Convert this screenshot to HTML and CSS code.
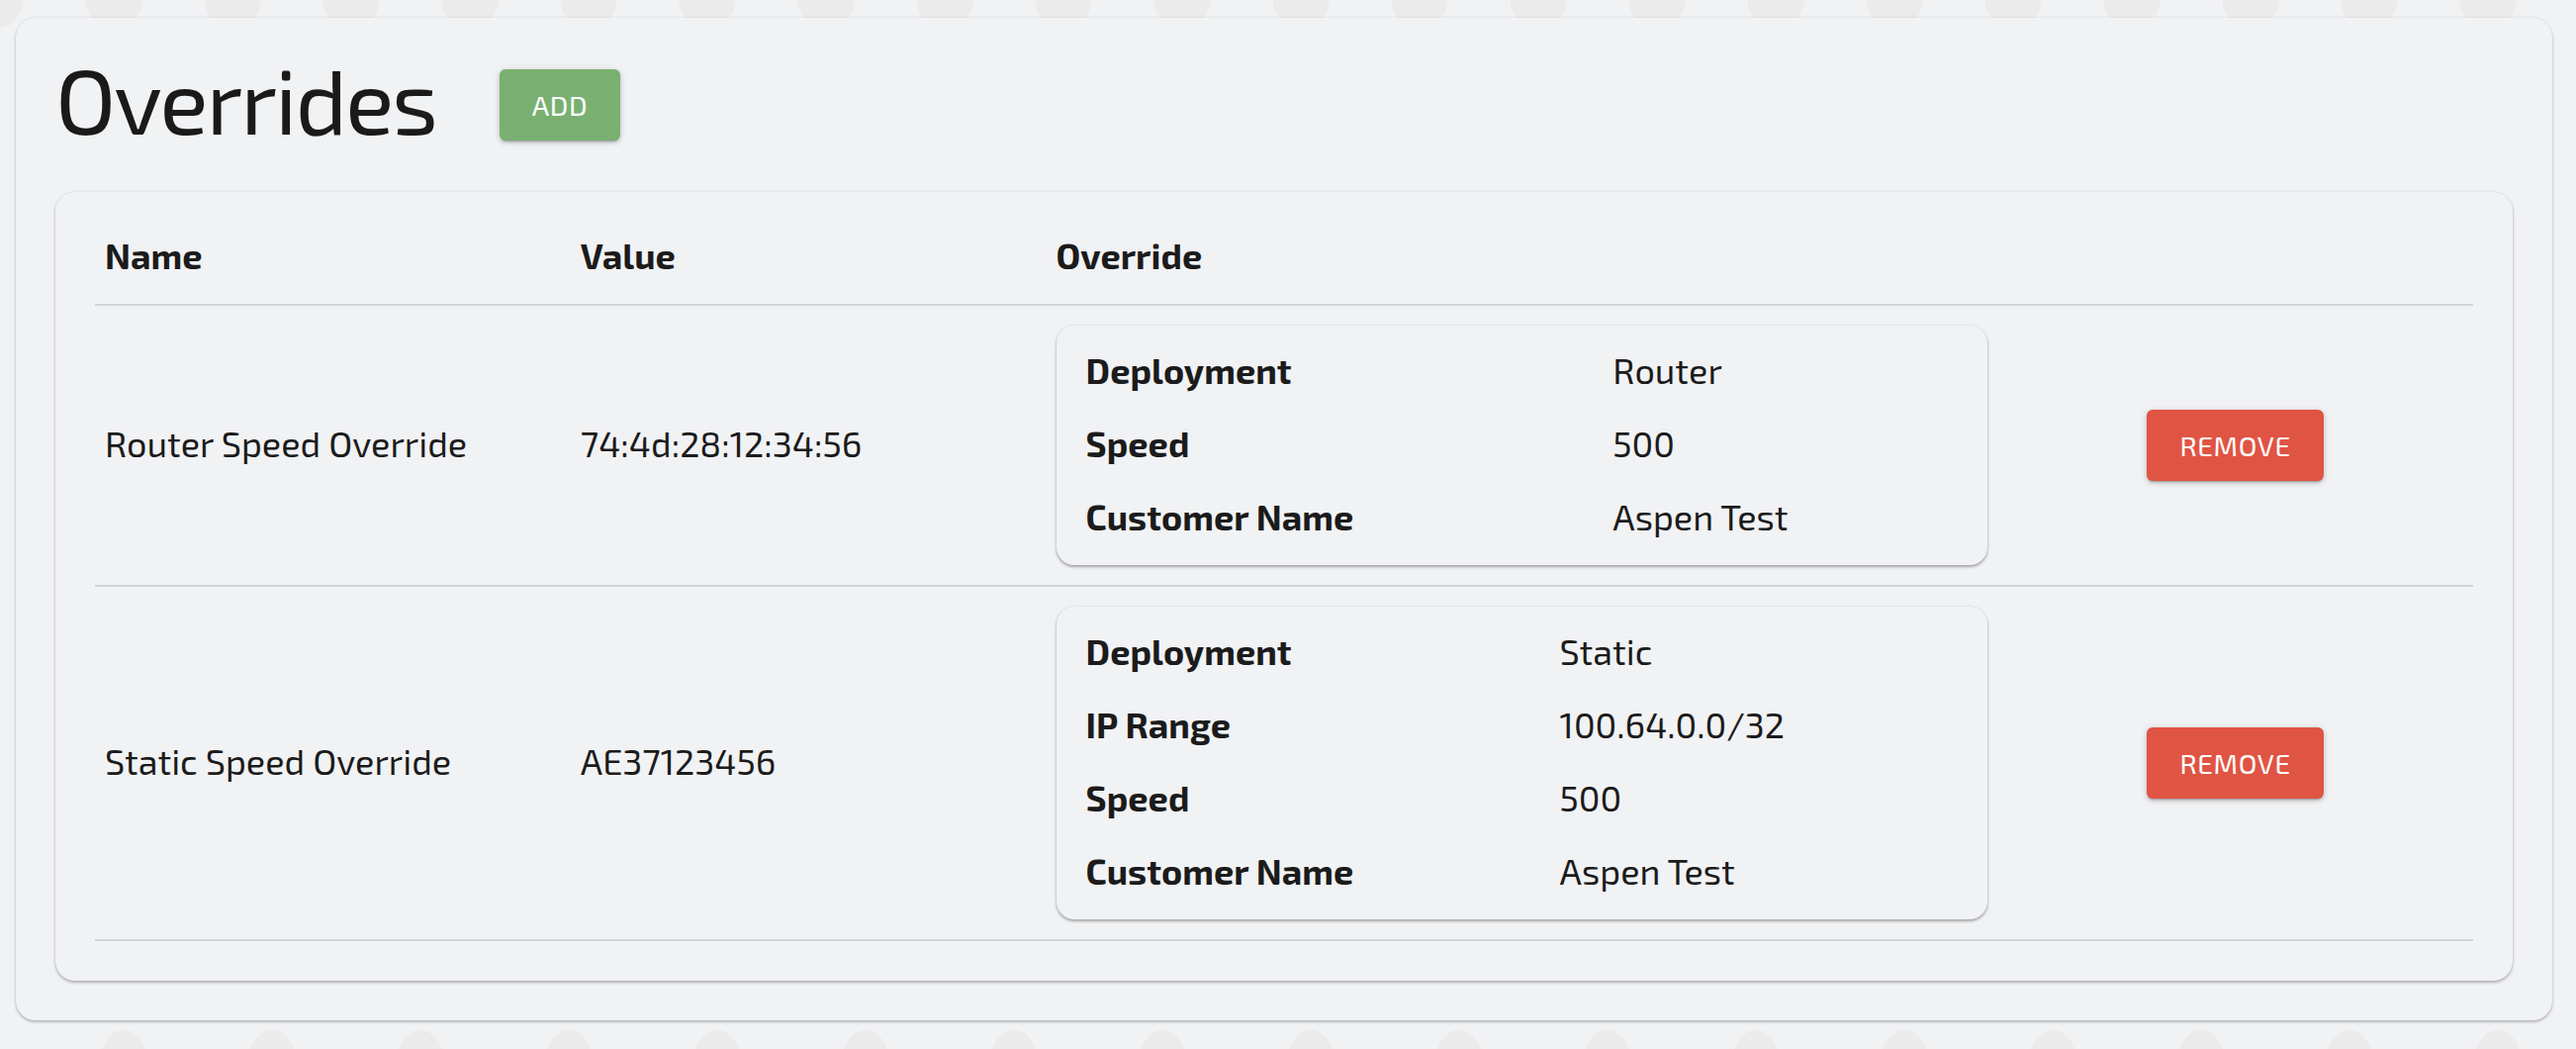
FILE: index.html
```html
<!DOCTYPE html>
<html lang="en">
<head>
<meta charset="utf-8">
<title>Overrides</title>
<link rel="stylesheet" href="styles.css">
</head>
<body>
<main class="panel">
  <header class="panel-head">
    <h1 class="panel-title">Overrides</h1>
    <button class="btn btn-add" type="button">ADD</button>
  </header>

  <section class="table-card">
    <table class="overrides">
      <colgroup>
        <col class="col-name">
        <col class="col-value">
        <col class="col-override">
        <col class="col-action">
      </colgroup>
      <thead>
        <tr class="head-row">
          <th class="head-cell">Name</th>
          <th class="head-cell">Value</th>
          <th class="head-cell">Override</th>
          <th class="head-cell"></th>
        </tr>
      </thead>
      <tbody>
        <tr>
          <td class="cell cell-text">Router Speed Override</td>
          <td class="cell cell-text">74:4d:28:12:34:56</td>
          <td class="cell">
            <div class="detail-card">
              <table class="detail">
                <tr class="detail-row"><th class="detail-key">Deployment</th><td class="detail-val">Router</td></tr>
                <tr class="detail-row"><th class="detail-key">Speed</th><td class="detail-val">500</td></tr>
                <tr class="detail-row"><th class="detail-key">Customer Name</th><td class="detail-val">Aspen Test</td></tr>
              </table>
            </div>
          </td>
          <td class="cell action"><button class="btn btn-remove" type="button">REMOVE</button></td>
        </tr>
        <tr>
          <td class="cell cell-text">Static Speed Override</td>
          <td class="cell cell-text">AE37123456</td>
          <td class="cell">
            <div class="detail-card">
              <table class="detail">
                <tr class="detail-row"><th class="detail-key">Deployment</th><td class="detail-val">Static</td></tr>
                <tr class="detail-row"><th class="detail-key">IP Range</th><td class="detail-val">100.64.0.0/32</td></tr>
                <tr class="detail-row"><th class="detail-key">Speed</th><td class="detail-val">500</td></tr>
                <tr class="detail-row"><th class="detail-key">Customer Name</th><td class="detail-val">Aspen Test</td></tr>
              </table>
            </div>
          </td>
          <td class="cell action"><button class="btn btn-remove" type="button">REMOVE</button></td>
        </tr>
      </tbody>
    </table>
  </section>
</main>
</body>
</html>
```
FILE: styles.css
```css
html, body {
  margin: 0;
  padding: 0;
}

body {
  height: 1060px;
  box-sizing: border-box;
  padding-top: 18px;
  background-color: #f1f2f4;
  background-image:
    radial-gradient(circle, #ebebec 0, #ebebec 28px, rgba(235,235,236,0) 29px),
    radial-gradient(ellipse 26px 40px, #ebebec 0, #ebebec 96%, rgba(235,235,236,0) 100%);
  background-size: 120px 120px, 150px 120px;
  background-repeat: repeat-x, repeat-x;
  background-position: 55px -60px, 1100px 1020px;
  font-family: "Exo 2", "Liberation Sans Narrow", "Liberation Sans", sans-serif;
  color: #1b1b1b;
  overflow: hidden;
}

.panel {
  margin: 0 24px 0 16px;
  padding: 0 40px 40px;
  background: #f1f2f4;
  border-radius: 20px;
  box-shadow: 0 2px 3px rgba(0, 0, 0, 0.22), 0 0 3px rgba(0, 0, 0, 0.10);
}

.panel-head {
  display: flex;
  align-items: flex-start;
  gap: 64px;
  padding: 52px 0 0 0;
  height: 72px;
}

.panel-title {
  margin: 0;
  font-size: 92px;
  font-weight: 400;
  line-height: 58px;
  letter-spacing: -2.2px;
  color: #1a1a1a;
}

.btn {
  height: 72px;
  border: 0;
  border-radius: 6px;
  padding: 0 33px;
  font-family: inherit;
  font-size: 28px;
  font-weight: 400;
  letter-spacing: 0.6px;
  color: #ffffff;
  cursor: pointer;
  box-shadow: 0 3px 2px -2px rgba(0, 0, 0, 0.22), 0 2px 4px rgba(0, 0, 0, 0.16), 0 1px 8px rgba(0, 0, 0, 0.10);
}

.btn-add {
  background: #79b072;
}

.btn-remove {
  background: #e05443;
}

.table-card {
  margin-top: 52px;
  padding: 20px 40px 40px;
  background: #f1f2f4;
  border-radius: 20px;
  box-shadow: 0 2px 3px rgba(0, 0, 0, 0.25), 0 0 3px rgba(0, 0, 0, 0.10);
}

.overrides {
  width: 100%;
  border-collapse: collapse;
  table-layout: fixed;
  font-size: 36px;
}

.col-name, .col-value, .col-action { width: 20%; }
.col-override { width: 40%; }

.head-row {
  height: 94px;
}

.head-cell {
  padding: 0 10px 6px;
  text-align: left;
  font-weight: 700;
  vertical-align: middle;
  border-bottom: 2px solid #d3d4d6;
}

.cell {
  padding: 20px 10px;
  vertical-align: middle;
  border-bottom: 2px solid #d3d4d6;
  font-weight: 400;
}

.cell-text {
  padding-top: 17px;
  padding-bottom: 23px;
}

.cell.action {
  text-align: center;
}

.detail-card {
  padding: 10px 30px;
  background: #f1f2f4;
  border-radius: 18px;
  box-shadow: 0 2px 3px rgba(0, 0, 0, 0.30), 0 0 3px rgba(0, 0, 0, 0.10);
}

.detail {
  width: 100%;
  border-collapse: collapse;
  font-size: 36px;
}

.detail-row {
  height: 74px;
}

.detail-key,
.detail-val {
  padding: 0 0 6px;
  text-align: left;
  vertical-align: middle;
  border: 0;
}

.detail-key {
  font-weight: 700;
}

.detail-val {
  font-weight: 400;
}
```
